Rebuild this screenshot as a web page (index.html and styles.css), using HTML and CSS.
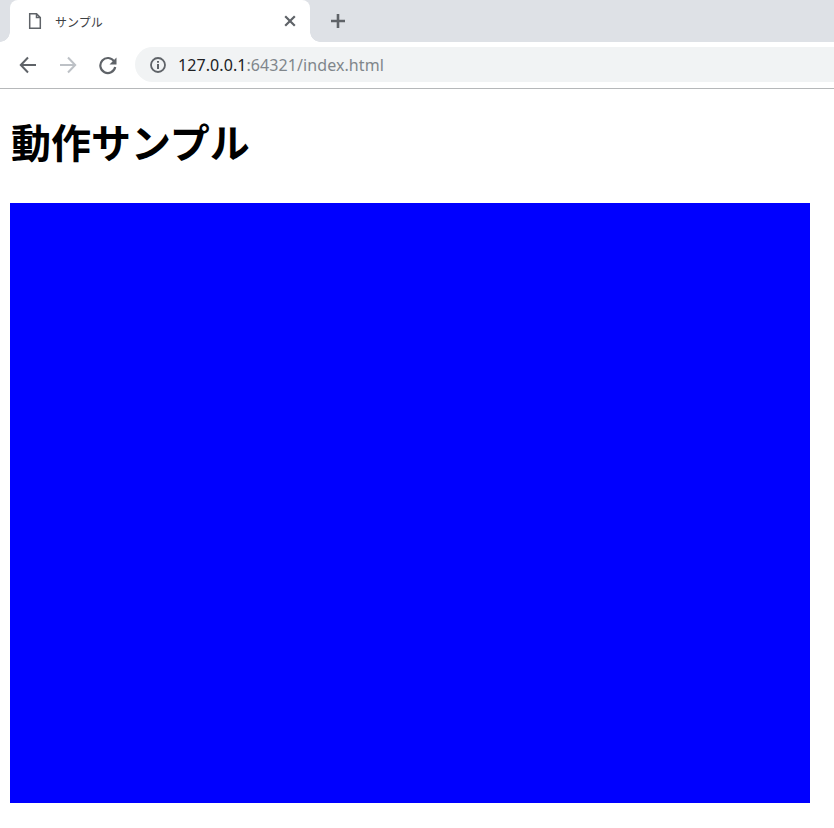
FILE: index.html
```html
<!DOCTYPE html>
<html lang="ja">

<head>
    <meta charset="UTF-8">
    <title>サンプル</title>
    <link rel="stylesheet" href="styles.css">
</head>

<body>

    <!-- Browser tabs -->
    <div class="tabstrip">
        <div class="tab">
            <svg class="tab-icon" width="16" height="16" viewBox="0 0 16 16">
                <path d="M2.7 .7H9.5L13.3 4.5V15.3H2.7Z M9.5 .7V4.5H13.3" fill="none" stroke="#5f6368" stroke-width="1.5" />
            </svg>
            <span class="tab-title">サンプル</span>
            <svg class="tab-close" width="12" height="12" viewBox="0 0 12 12">
                <path d="M1.2 1.2L10.8 10.8M10.8 1.2L1.2 10.8" stroke="#5f6368" stroke-width="2.2" />
            </svg>
        </div>
        <svg class="new-tab" width="16" height="16" viewBox="0 0 16 16">
            <path d="M8 1V15M1 8H15" stroke="#5f6368" stroke-width="2.6" />
        </svg>
    </div>

    <!-- Toolbar -->
    <div class="toolbar">
        <svg class="nav-icon" width="20" height="20" viewBox="0 0 20 20">
            <path d="M18 10H3M10 2.5L2.8 10L10 17.5" fill="none" stroke="#5f6368" stroke-width="2" />
        </svg>
        <svg class="nav-icon" width="20" height="20" viewBox="0 0 20 20">
            <path d="M2 10H17M10 2.5L17.2 10L10 17.5" fill="none" stroke="#bdc1c6" stroke-width="2" />
        </svg>
        <svg class="nav-icon" width="20" height="20" viewBox="0 0 20 20">
            <path d="M16.2 6.5A7.5 7.5 0 1 0 17.2 12" fill="none" stroke="#5f6368" stroke-width="2.2" />
            <path d="M18.5 2.5V9.5H11.5Z" fill="#5f6368" />
        </svg>
        <div class="omnibox">
            <svg class="info-icon" width="16" height="16" viewBox="0 0 16 16">
                <circle cx="8" cy="8" r="7" fill="none" stroke="#5f6368" stroke-width="1.8" />
                <path d="M8 7V12" stroke="#5f6368" stroke-width="2" />
                <path d="M8 4V5.8" stroke="#5f6368" stroke-width="2" />
            </svg>
            <span class="url">127.0.0.1<span class="url-rest">:64321/index.html</span></span>
        </div>
    </div>

    <!-- Page -->
    <div class="page">
        <h1>動作サンプル</h1>
        <canvas class="stage" width="800" height="600"></canvas>
    </div>

    <script>
        var stage = document.querySelector(".stage");
        var ctx = stage.getContext("2d");
        ctx.fillStyle = "#0000ff";
        ctx.fillRect(0, 0, stage.width, stage.height);
    </script>

</body>

</html>
```

FILE: styles.css
```css
* {
    padding: 0;
    margin: 0;
    box-sizing: border-box;
}

body {
    background-color: white;
    font-family: "Noto Sans CJK JP", sans-serif;
    overflow: hidden;
}

.tabstrip {
    height: 42px;
    padding-left: 10px;
    background-color: #dee1e6;
    display: flex;
    align-items: center;
}

.tab {
    position: relative;
    width: 300px;
    height: 42px;
    padding: 0 14px 0 17px;
    background-color: white;
    border-radius: 8px 8px 0 0;
    display: flex;
    align-items: center;
}

.tab::before,
.tab::after {
    content: "";
    position: absolute;
    bottom: 0;
    width: 10px;
    height: 10px;
}

.tab::before {
    left: -10px;
    background: radial-gradient(circle at 0 0, transparent 9.5px, white 10px);
}

.tab::after {
    right: -10px;
    background: radial-gradient(circle at 100% 0, transparent 9.5px, white 10px);
}

.tab-icon {
    flex-shrink: 0;
}

.tab-title {
    flex: 1;
    margin-left: 12px;
    font-size: 12px;
    color: #3c4043;
}

.new-tab {
    margin-left: 20px;
}

.toolbar {
    height: 47px;
    padding: 5px 0 6px 18px;
    background-color: white;
    border-bottom: 1px solid #b6b8ba;
    display: flex;
    align-items: center;
    gap: 20px;
}

.nav-icon {
    flex-shrink: 0;
}

.omnibox {
    flex: 1;
    height: 35px;
    margin-left: -3px;
    padding-left: 15px;
    background-color: #f1f3f4;
    border-radius: 18px 0 0 18px;
    display: flex;
    align-items: center;
    gap: 12px;
}

.url {
    font-family: "Noto Sans", sans-serif;
    font-size: 16px;
    letter-spacing: 0.08px;
    color: #202124;
}

.url-rest {
    color: #80868b;
}

.page {
    padding: 0 10px;
}

h1 {
    margin-top: 25px;
    padding-left: 1px;
    font-size: 40px;
    line-height: 55px;
    font-weight: bold;
    color: black;
}

.stage {
    display: block;
    margin-top: 34px;
}
```
